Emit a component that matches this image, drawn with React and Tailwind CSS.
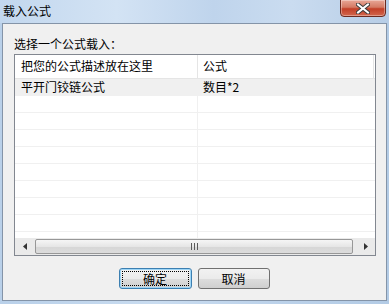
const CJK = { fontFamily: '"Noto Sans CJK SC", "Microsoft YaHei", sans-serif' };

function CloseButton() {
  return (
    <div className="w-[46px] h-[18px] -mt-[1px] rounded-b-[4px] border border-[#6b2a20] bg-[linear-gradient(#e8a797,#d47a64_45%,#c23f27_55%,#d2674e)] flex items-center justify-center shadow-[inset_0_0_0_1px_rgba(255,255,255,0.35)]">
      <svg width="14" height="11" viewBox="0 0 14 11">
        <path d="M2 1.5 L12 9.5 M12 1.5 L2 9.5" stroke="#3b3b3b" strokeWidth="4" strokeLinecap="square" />
        <path d="M2 1.5 L12 9.5 M12 1.5 L2 9.5" stroke="#ffffff" strokeWidth="2" strokeLinecap="square" />
      </svg>
    </div>
  );
}

function Row({ name, formula, selected }) {
  return (
    <div className={`flex h-[17px] shrink-0 border-b border-[#f0f0f0] ${selected ? "bg-[#f0f0f0]" : "bg-white"}`}>
      <div className="w-[183px] shrink-0 border-r border-[#f0f0f0] pl-[6px] text-[12px] leading-[16px] text-black">{name}</div>
      <div className="flex-1 pl-[5px] text-[12px] leading-[16px] text-black">{formula}</div>
    </div>
  );
}

function ScrollBar() {
  return (
    <div className="flex h-[17px] shrink-0 items-center bg-[#eaeaea] px-[1px]">
      <div className="w-[17px] h-[15px] flex items-center justify-center">
        <svg width="4" height="7" viewBox="0 0 4 7"><path d="M4 0 L0 3.5 L4 7 Z" fill="#333" /></svg>
      </div>
      <div className="ml-[2px] w-[318px] h-[15px] rounded-[2px] border border-[#979797] bg-[linear-gradient(#f5f5f5,#e6e6e6_50%,#d6d6d6_51%,#dcdcdc)] flex items-center justify-center">
        <svg width="7" height="7" viewBox="0 0 7 7">
          <path d="M0.5 0 V7 M3.5 0 V7 M6.5 0 V7" stroke="#5a5a5a" strokeWidth="1" />
        </svg>
      </div>
      <div className="flex-1" />
      <div className="w-[17px] h-[15px] flex items-center justify-center">
        <svg width="4" height="7" viewBox="0 0 4 7"><path d="M0 0 L4 3.5 L0 7 Z" fill="#333" /></svg>
      </div>
    </div>
  );
}

export default function App() {
  const empty = Array.from({ length: 9 });
  return (
    <div
      className="w-[389px] h-[304px] flex flex-col bg-[linear-gradient(90deg,#b9d0e9,#c9dcf0_40%,#bcd2ea_70%,#b3cbe5)] overflow-hidden"
      style={CJK}
    >
      <div className="h-[23px] shrink-0 flex items-start justify-between pl-[3px] pr-[3px] bg-[linear-gradient(90deg,#c2d7ee,#d3e3f4_30%,#bfd4ec_55%,#cadcf0_75%,#b7cde6)]">
        <span className="mt-[3px] text-[12px] leading-[16px] text-black">载入公式</span>
        <CloseButton />
      </div>
      <div className="flex-1 mx-[2px] mb-[3px] border border-[#8494a8] bg-[#f0f0f0] flex flex-col pl-[11px] pr-[10px] pt-[12px]">
        <div className="h-[16px] text-[12px] leading-[16px] text-black mb-[2px]">选择一个公式载入：</div>
        <div className="h-[202px] w-[362px] shrink-0 border border-[#828790] bg-white flex flex-col overflow-hidden">
          <div className="flex h-[24px] shrink-0 border-b border-[#e5e5e5] bg-white">
            <div className="w-[183px] shrink-0 border-r border-[#e5e5e5] pl-[6px] text-[12px] leading-[22px] text-black">把您的公式描述放在这里</div>
            <div className="flex-1 pl-[5px] text-[12px] leading-[22px] text-black border-r border-[#e5e5e5] mr-[1px]">公式</div>
          </div>
          <div className="flex-1 flex flex-col overflow-hidden">
            <Row name="平开门铰链公式" formula="数目*2" selected />
            {empty.map((_, i) => (
              <Row key={i} name="" formula="" />
            ))}
          </div>
          <ScrollBar />
        </div>
        <div className="flex justify-center gap-[6px] mt-[12px] pr-[2px]">
          <button className="w-[73px] h-[21px] rounded-[3px] border border-[#3c7fb1] bg-[linear-gradient(#f2f2f2,#ebebeb_50%,#dddddd_51%,#cfcfcf)] p-[2px] shadow-[inset_0_0_0_1px_#9ed6f7]">
            <span className="block h-full border border-dotted border-black text-[12px] leading-[13px] text-black">确定</span>
          </button>
          <button className="w-[72px] h-[21px] rounded-[3px] border border-[#707070] bg-[linear-gradient(#f2f2f2,#ebebeb_50%,#dddddd_51%,#cfcfcf)] text-[12px] leading-[17px] text-black">
            取消
          </button>
        </div>
      </div>
    </div>
  );
}
